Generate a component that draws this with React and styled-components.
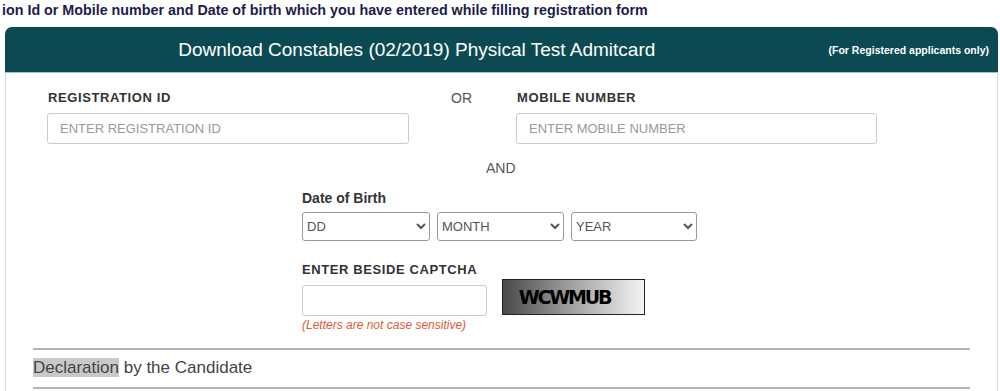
import React from "react";
import styled, { createGlobalStyle } from "styled-components";

const Global = createGlobalStyle`
  html, body { margin: 0; padding: 0; background: #fff; }
  body { font-family: "Liberation Sans", Arial, sans-serif; color: #333; overflow: hidden; }
`;

const TopNote = styled.div`
  font-size: 14.3px;
  font-weight: bold;
  color: #1c1c4c;
  line-height: 16px;
  padding: 2px 0 0 2px;
  height: 25px;
  white-space: nowrap;
  overflow: hidden;
`;

const Panel = styled.section`
  margin-left: 5px;
  width: 993px;
  border: 1px solid #dcdcdc;
  border-top: none;
  border-radius: 7px 7px 0 0;
  height: 366px;
  box-sizing: border-box;
`;

const Header = styled.header`
  display: flex;
  align-items: center;
  height: 45px;
  margin: 0 -1px;
  background: #0c4a53;
  border-radius: 7px 7px 0 0;
  color: #fff;
  border-bottom: 1px solid #9fc6c9;
`;

const Title = styled.h2`
  flex: 1;
  margin: 0;
  text-align: center;
  font-size: 19px;
  font-weight: normal;
  padding-top: 1px;
`;

const Note = styled.span`
  font-size: 10.5px;
  font-weight: bold;
  padding-right: 9px;
`;

const Body = styled.div`
  padding-top: 17px;
`;

const FieldRow = styled.div`
  display: flex;
  padding-left: 41px;
`;

const Field = styled.div`
  display: flex;
  flex-direction: column;
  width: ${(p) => p.$w}px;
`;

const Label = styled.label`
  font-size: 13px;
  font-weight: bold;
  letter-spacing: 0.6px;
  line-height: 16px;
  color: #333;
  margin-bottom: 7px;
  padding-left: 1px;
`;

const TextInput = styled.input`
  box-sizing: border-box;
  width: 100%;
  height: 31px;
  border: 1px solid #ccc;
  border-radius: 3px;
  padding: 0 12px;
  font-family: "Liberation Sans", Arial, sans-serif;
  font-size: 13px;
  color: #555;
  outline: none;
  &::placeholder { color: #999; }
`;

const Conj = styled.div`
  font-size: 14px;
  line-height: 16px;
  color: #555;
  width: ${(p) => p.$w || "auto"};
  margin-left: ${(p) => p.$ml || 0}px;
  margin-top: ${(p) => p.$mt || 0}px;
`;

const Block = styled.div`
  padding-left: 296px;
  margin-top: ${(p) => p.$mt}px;
`;

const BlockLabel = styled.div`
  font-size: ${(p) => p.$fs || 13}px;
  letter-spacing: ${(p) => p.$ls || 0}px;
  font-weight: bold;
  line-height: 16px;
  color: #333;
  margin-bottom: ${(p) => p.$mb}px;
`;

const SelectRow = styled.div`
  display: flex;
  gap: 7px;
`;

const Select = styled.select`
  box-sizing: border-box;
  width: ${(p) => p.$w}px;
  height: 29px;
  border: 1px solid #999;
  border-radius: 3px;
  background: #fff;
  font-family: "Liberation Sans", Arial, sans-serif;
  font-size: 13px;
  color: #555;
  padding: 0;
`;

const CaptchaRow = styled.div`
  display: flex;
  align-items: flex-end;
  gap: 15px;
`;

const CaptchaInput = styled(TextInput)`
  width: 185px;
`;

const CaptchaImg = styled.div`
  box-sizing: border-box;
  width: 143px;
  height: 36px;
  margin-bottom: 1px;
  border: 1px solid #222;
  background: linear-gradient(90deg, #4a4a4a 0%, #9a9a9a 45%, #f4f4f4 100%);
  display: flex;
  align-items: center;
  justify-content: center;
  padding-right: 18px;
  font-family: "DejaVu Sans", sans-serif;
  font-weight: bold;
  font-size: 19px;
  letter-spacing: -2.2px;
  color: #000;
`;

const Hint = styled.div`
  font-size: 12px;
  font-style: italic;
  color: #e05a3a;
  line-height: 14px;
  margin-top: 2px;
`;

const Divider = styled.hr`
  margin: ${(p) => p.$mt}px 27px 0 27px;
  border: none;
  border-top: 2px solid #b4b4b4;
  height: 0;
`;

const Declaration = styled.p`
  margin: 0;
  padding: 8px 0 0 27px;
  font-size: 17px;
  line-height: 20px;
  color: #444;
  height: 21px;
  mark {
    background: #c9c9c9;
    color: #444;
  }
`;

export default function App() {
  return (
    <>
      <Global />
      <TopNote>
        ion Id or Mobile number and Date of birth which you have entered while filling registration form
      </TopNote>
      <Panel>
        <Header>
          <Title>Download Constables (02/2019) Physical Test Admitcard</Title>
          <Note>(For Registered applicants only)</Note>
        </Header>
        <Body>
          <FieldRow>
            <Field $w={362}>
              <Label>REGISTRATION ID</Label>
              <TextInput placeholder="ENTER REGISTRATION ID" />
            </Field>
            <Conj $ml={42} $w="65px">OR</Conj>
            <Field $w={361}>
              <Label>MOBILE NUMBER</Label>
              <TextInput placeholder="ENTER MOBILE NUMBER" />
            </Field>
          </FieldRow>
          <Conj $ml={480} $mt={16}>AND</Conj>
          <Block $mt={14}>
            <BlockLabel $fs={14} $mb={6}>Date of Birth</BlockLabel>
            <SelectRow>
              <Select $w={128}><option>DD</option></Select>
              <Select $w={127}><option>MONTH</option></Select>
              <Select $w={126}><option>YEAR</option></Select>
            </SelectRow>
          </Block>
          <Block $mt={21}>
            <BlockLabel $ls={0.6} $mb={1}>ENTER BESIDE CAPTCHA</BlockLabel>
            <CaptchaRow>
              <CaptchaInput />
              <CaptchaImg>WCWMUB</CaptchaImg>
            </CaptchaRow>
            <Hint>(Letters are not case sensitive)</Hint>
          </Block>
          <Divider $mt={16} />
          <Declaration>
            <mark>Declaration</mark> by the Candidate
          </Declaration>
          <Divider $mt={8} />
        </Body>
      </Panel>
    </>
  );
}
